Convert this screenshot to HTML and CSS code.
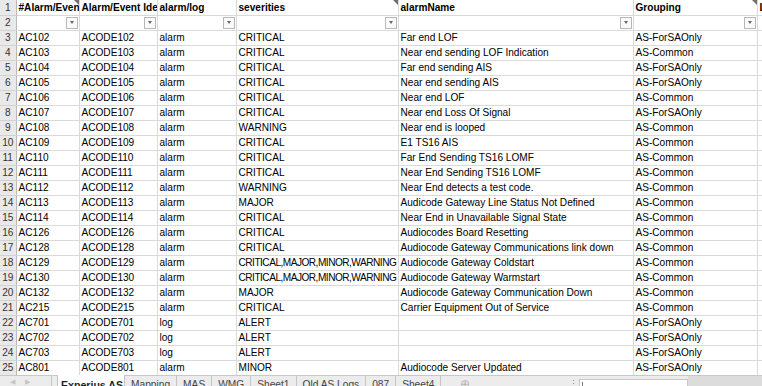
FILE: index.html
```html
<!DOCTYPE html>
<html lang="en">
<head>
    <meta charset="UTF-8">
    <meta name="viewport" content="width=device-width, initial-scale=1.0">
    <title>Alarm list - Experius AS</title>
    <link rel="stylesheet" href="styles.css">
</head>
<body>

<div class="sheet-wrap">
    <table class="sheet">
        <colgroup>
            <col class="c-rh">
            <col class="c-a">
            <col class="c-b">
            <col class="c-c">
            <col class="c-d">
            <col class="c-e">
            <col class="c-f">
            <col class="c-g">
        </colgroup>
        <tr class="head">
            <th>1</th>
            <td class="mark">#Alarm/Even</td>
            <td>Alarm/Event Ide</td>
            <td>alarm/log</td>
            <td class="mark">severities</td>
            <td>alarmName</td>
            <td class="mark">Grouping</td>
            <td>L</td>
        </tr>
        <tr class="filters">
            <th>2</th>
            <td><div class="fcell"><span class="fbtn"></span></div></td>
            <td><div class="fcell"><span class="fbtn"></span></div></td>
            <td><div class="fcell"><span class="fbtn"></span></div></td>
            <td><div class="fcell"><span class="fbtn"></span></div></td>
            <td><div class="fcell"><span class="fbtn"></span></div></td>
            <td><div class="fcell"><span class="fbtn"></span></div></td>
            <td></td>
        </tr>
        <tr><th>3</th><td>AC102</td><td>ACODE102</td><td>alarm</td><td>CRITICAL</td><td>Far end LOF</td><td>AS-ForSAOnly</td><td></td></tr>
        <tr><th>4</th><td>AC103</td><td>ACODE103</td><td>alarm</td><td>CRITICAL</td><td>Near end sending LOF Indication</td><td>AS-Common</td><td></td></tr>
        <tr><th>5</th><td>AC104</td><td>ACODE104</td><td>alarm</td><td>CRITICAL</td><td>Far end sending AIS</td><td>AS-ForSAOnly</td><td></td></tr>
        <tr><th>6</th><td>AC105</td><td>ACODE105</td><td>alarm</td><td>CRITICAL</td><td>Near end sending AIS</td><td>AS-ForSAOnly</td><td></td></tr>
        <tr><th>7</th><td>AC106</td><td>ACODE106</td><td>alarm</td><td>CRITICAL</td><td>Near end LOF</td><td>AS-Common</td><td></td></tr>
        <tr><th>8</th><td>AC107</td><td>ACODE107</td><td>alarm</td><td>CRITICAL</td><td>Near end Loss Of Signal</td><td>AS-ForSAOnly</td><td></td></tr>
        <tr><th>9</th><td>AC108</td><td>ACODE108</td><td>alarm</td><td>WARNING</td><td>Near end is looped</td><td>AS-Common</td><td></td></tr>
        <tr><th>10</th><td>AC109</td><td>ACODE109</td><td>alarm</td><td>CRITICAL</td><td>E1 TS16 AIS</td><td>AS-Common</td><td></td></tr>
        <tr><th>11</th><td>AC110</td><td>ACODE110</td><td>alarm</td><td>CRITICAL</td><td>Far End Sending TS16 LOMF</td><td>AS-Common</td><td></td></tr>
        <tr><th>12</th><td>AC111</td><td>ACODE111</td><td>alarm</td><td>CRITICAL</td><td>Near End Sending TS16 LOMF</td><td>AS-Common</td><td></td></tr>
        <tr><th>13</th><td>AC112</td><td>ACODE112</td><td>alarm</td><td>WARNING</td><td>Near End detects a test code.</td><td>AS-Common</td><td></td></tr>
        <tr><th>14</th><td>AC113</td><td>ACODE113</td><td>alarm</td><td>MAJOR</td><td>Audicode Gateway Line Status Not Defined</td><td>AS-Common</td><td></td></tr>
        <tr><th>15</th><td>AC114</td><td>ACODE114</td><td>alarm</td><td>CRITICAL</td><td>Near End in Unavailable Signal State</td><td>AS-Common</td><td></td></tr>
        <tr><th>16</th><td>AC126</td><td>ACODE126</td><td>alarm</td><td>CRITICAL</td><td>Audiocodes Board Resetting</td><td>AS-Common</td><td></td></tr>
        <tr><th>17</th><td>AC128</td><td>ACODE128</td><td>alarm</td><td>CRITICAL</td><td>Audiocode Gateway Communications link down</td><td>AS-Common</td><td></td></tr>
        <tr><th>18</th><td>AC129</td><td>ACODE129</td><td>alarm</td><td class="tight">CRITICAL,MAJOR,MINOR,WARNING</td><td>Audiocode Gateway Coldstart</td><td>AS-Common</td><td></td></tr>
        <tr><th>19</th><td>AC130</td><td>ACODE130</td><td>alarm</td><td class="tight">CRITICAL,MAJOR,MINOR,WARNING</td><td>Audiocode Gateway Warmstart</td><td>AS-Common</td><td></td></tr>
        <tr><th>20</th><td>AC132</td><td>ACODE132</td><td>alarm</td><td>MAJOR</td><td>Audiocode Gateway Communication Down</td><td>AS-Common</td><td></td></tr>
        <tr><th>21</th><td>AC215</td><td>ACODE215</td><td>alarm</td><td>CRITICAL</td><td>Carrier Equipment Out of Service</td><td>AS-Common</td><td></td></tr>
        <tr><th>22</th><td>AC701</td><td>ACODE701</td><td>log</td><td>ALERT</td><td></td><td>AS-ForSAOnly</td><td></td></tr>
        <tr><th>23</th><td>AC702</td><td>ACODE702</td><td>log</td><td>ALERT</td><td></td><td>AS-ForSAOnly</td><td></td></tr>
        <tr><th>24</th><td>AC703</td><td>ACODE703</td><td>log</td><td>ALERT</td><td></td><td>AS-ForSAOnly</td><td></td></tr>
        <tr><th>25</th><td>AC801</td><td>ACODE801</td><td>alarm</td><td>MINOR</td><td>Audiocode Server Updated</td><td>AS-ForSAOnly</td><td></td></tr>
    </table>
</div>

<div class="tabbar">
    <div class="nav">
        <span>&#9664;</span>
        <span>&#9654;</span>
    </div>
    <div class="tab active">Experius AS</div>
    <div class="tab">Mapping</div>
    <div class="tab">MAS</div>
    <div class="tab">WMG</div>
    <div class="tab">Sheet1</div>
    <div class="tab">Old AS Logs</div>
    <div class="tab">087</div>
    <div class="tab">Sheet4</div>
    <div class="add">&#8853;</div>
    <div class="dots">&#8942;</div>
    <div class="hscroll"><span class="thumb"></span></div>
    <div class="rest"></div>
</div>

</body>
</html>
```

FILE: styles.css
```css
body {
    margin: 0;
    width: 762px;
    height: 386px;
    overflow: hidden;
    background-color: #fff;
    font-family: "Liberation Sans", Arial, sans-serif;
    font-size: 10.1px;
    color: #000;
}

.sheet-wrap {
    height: 375px;
    overflow: hidden;
}

.sheet {
    border-collapse: collapse;
    table-layout: fixed;
    width: 820px;
}

.c-rh { width: 16px; }
.c-a { width: 63px; }
.c-b { width: 78px; }
.c-c { width: 79px; }
.c-d { width: 162px; }
.c-e { width: 235px; }
.c-f { width: 124px; }
.c-g { width: 63px; }

.sheet tr {
    height: 15px;
}

.sheet th,
.sheet td {
    padding: 0 0 0 2px;
    height: 14px;
    line-height: 14px;
    white-space: nowrap;
    overflow: hidden;
    text-overflow: clip;
    border: 1px solid #dadada;
    text-align: left;
    vertical-align: bottom;
}

.sheet tr:first-child th,
.sheet tr:first-child td {
    border-top: none;
}

.sheet th {
    padding: 0;
    background-color: #e9e9e9;
    color: #333;
    font-weight: normal;
    text-align: center;
    border-left: none;
    border-right: 1px solid #b9b9b9;
    border-bottom-color: #d2d2d2;
}

.head td {
    font-weight: bold;
}

/* long severity lists are squeezed a bit so they fit the column */
.sheet td.tight {
    letter-spacing: -0.5px;
}

.mark {
    position: relative;
}

.mark::after {
    content: "";
    position: absolute;
    top: 0;
    right: 0;
    border-style: solid;
    border-width: 0 5px 5px 0;
    border-color: transparent #6f6f6f transparent transparent;
}

.fcell {
    display: flex;
    justify-content: flex-end;
    align-items: center;
    height: 14px;
    padding-right: 1px;
}

.fbtn {
    display: flex;
    align-items: center;
    justify-content: center;
    width: 10px;
    height: 10px;
    border: 1px solid #b8b8b8;
    background-color: #fafafa;
}

.fbtn::after {
    content: "";
    border-style: solid;
    border-width: 3px 2.5px 0 2.5px;
    border-color: #666 transparent transparent transparent;
}

/* sheet tabs */
.tabbar {
    display: flex;
    align-items: stretch;
    height: 24px;
    background-color: #ececec;
    border-top: 1px solid #c8c8c8;
    color: #444;
    font-size: 10.2px;
}

.nav {
    display: flex;
    gap: 10px;
    width: 52px;
    padding: 2px 0 0 10px;
    box-sizing: border-box;
    color: #c4c4c4;
    font-size: 7px;
    border-right: 1px solid #c8c8c8;
    margin-right: 5px;
}

.tab {
    padding: 3px 6px 0;
    border-right: 1px solid #c4c4c4;
}

.tab.active {
    background-color: #fff;
    color: #1f1f1f;
    font-weight: bold;
    font-size: 10.6px;
    border-left: 1px solid #c4c4c4;
    margin-top: -1px;
    padding-top: 4px;
    padding-left: 3px;
    padding-right: 1px;
}

.add {
    padding: 1px 0 0 19px;
    width: 128px;
    box-sizing: border-box;
    color: #b4b4b4;
    font-size: 12px;
}

.dots {
    padding: 3px 0 0 0;
    width: 10px;
    color: #888;
    font-size: 9px;
}

.hscroll {
    width: 105px;
    margin-top: 3px;
    background-color: #fff;
    border: 1px solid #c8c8c8;
    padding: 2px 0 0 2px;
}

.thumb {
    display: block;
    width: 1px;
    height: 6px;
    background-color: #777;
}

.rest {
    flex: 1;
    background-color: #dcdcdc;
}
```
